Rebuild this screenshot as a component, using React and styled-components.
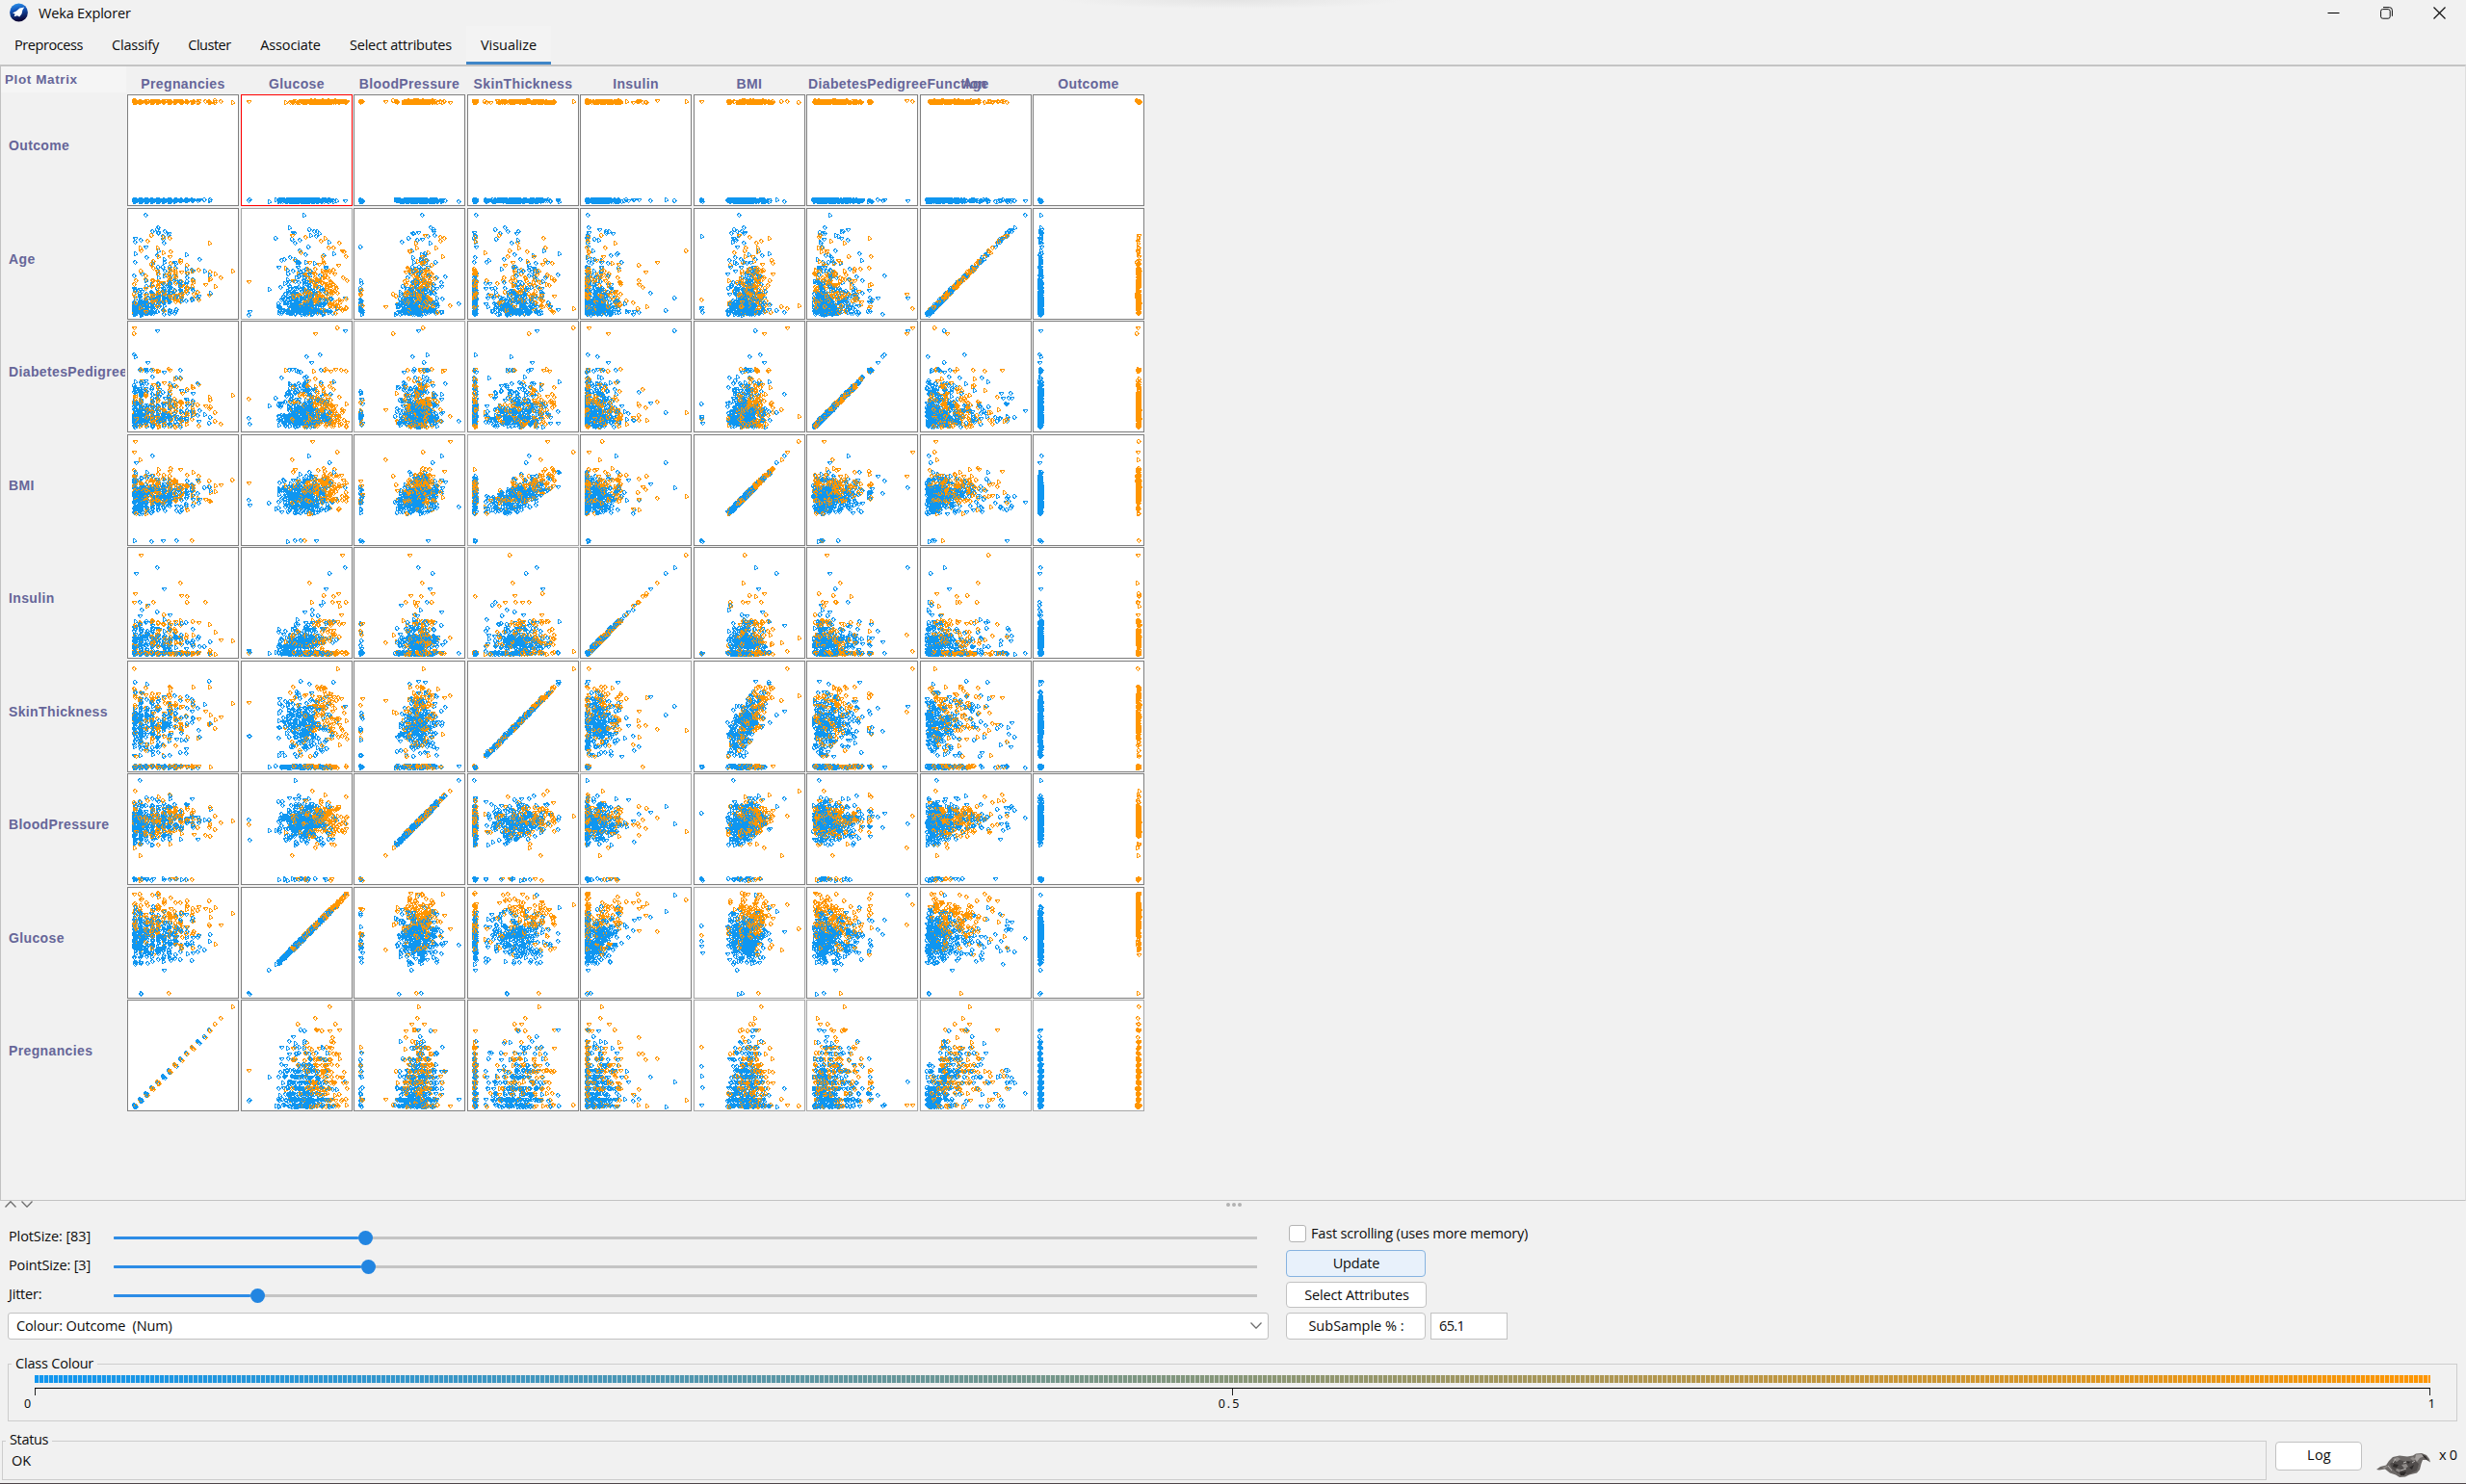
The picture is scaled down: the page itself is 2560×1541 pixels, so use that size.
import React from "react";
import styled, { createGlobalStyle } from "styled-components";

/* ---------- data ---------- */

function makeRandom(seed) {
  let s = seed;
  return () => {
    s = (s + 0x6d2b79f5) | 0;
    let t = Math.imul(s ^ (s >>> 15), 1 | s);
    t = (t + Math.imul(t ^ (t >>> 7), 61 | t)) ^ t;
    return ((t ^ (t >>> 14)) >>> 0) / 4294967296;
  };
}

// Columns: pregnancies, glucose, pressure, skin, insulin, bmi, pedigree, age, outcome
const NOTABLE = [
  [0, 129, 110, 46, 130, 67.1, 0.319, 26, 1],
  [13, 152, 90, 33, 29, 26.8, 0.731, 43, 1],
  [0, 180, 78, 63, 14, 59.4, 2.42, 25, 1],
  [4, 197, 70, 39, 744, 36.7, 2.329, 31, 0],
  [17, 163, 72, 41, 114, 40.9, 0.817, 47, 1],
  [2, 112, 76, 0, 0, 25.9, 0.46, 81, 0],
  [1, 189, 60, 23, 846, 30.1, 0.398, 59, 1],
  [0, 137, 40, 35, 168, 43.1, 2.288, 33, 1],
  [3, 123, 100, 35, 240, 57.3, 0.88, 22, 0],
  [1, 88, 30, 42, 99, 55, 0.496, 26, 1],
  [0, 173, 78, 54, 265, 46.5, 1.159, 58, 0],
  [5, 44, 62, 0, 0, 25, 0.587, 36, 0],
  [1, 96, 122, 0, 0, 22.4, 0.207, 27, 0],
  [1, 0, 48, 20, 0, 24.7, 0.14, 22, 0],
  [1, 0, 74, 20, 23, 27.7, 0.299, 21, 0],
  [6, 0, 68, 41, 0, 39, 0.727, 41, 1],
  [0, 165, 90, 33, 680, 52.3, 0.427, 23, 0],
  [8, 124, 76, 24, 600, 28.7, 0.687, 52, 1],
  [5, 155, 84, 44, 545, 38.7, 0.619, 34, 0],
  [0, 181, 88, 44, 510, 43.3, 0.222, 26, 1],
  [9, 173, 74, 0, 480, 36.8, 0.97, 38, 1],
  [8, 155, 62, 26, 495, 34, 0.543, 46, 1],
  [14, 100, 78, 25, 184, 36.6, 0.412, 46, 1],
  [14, 175, 62, 30, 0, 33.6, 0.212, 38, 1],
  [15, 136, 70, 32, 110, 37.1, 0.153, 43, 1],
  [13, 106, 72, 54, 0, 36.6, 0.178, 45, 0],
  [12, 88, 74, 40, 54, 35.3, 0.378, 48, 0],
  [0, 118, 64, 23, 89, 32.5, 1.731, 21, 0],
  [0, 146, 82, 0, 0, 40.5, 1.781, 44, 0],
  [2, 128, 78, 37, 182, 43.3, 1.6, 31, 0],
  [4, 83, 86, 19, 0, 29.3, 0.317, 74, 0],
  [0, 57, 60, 0, 0, 21.7, 0.735, 67, 0],
  [5, 115, 98, 0, 0, 32.9, 0.209, 68, 1],
  [0, 161, 50, 0, 0, 21.9, 0.254, 65, 0],
  [5, 136, 82, 0, 0, 0, 0.64, 69, 0],
  [3, 80, 0, 0, 0, 0, 0.174, 22, 0],
  [10, 115, 0, 0, 0, 0, 0.261, 30, 1],
  [0, 94, 0, 0, 0, 0, 0.256, 25, 0],
  [7, 105, 0, 0, 0, 0, 0.305, 24, 0],
];

function buildRecords(count) {
  const rnd = makeRandom(20240);
  const gauss = () => Math.sqrt(-2 * Math.log(rnd() + 1e-9)) * Math.cos(6.2831853 * rnd());
  const clamp = (v, a, b) => Math.max(a, Math.min(b, v));
  const rows = [];
  while (rows.length < count - NOTABLE.length) {
    const out = rnd() < 0.345 ? 1 : 0;
    const expo = -Math.log(rnd() + 1e-4);
    const age = Math.round(
      clamp(out ? 21 + (expo - Math.log(rnd() + 1e-3)) * 7.8 : 21 + expo * 10.6, 21, 70 + gauss() * 2)
    );
    const preg = Math.round(
      age < 29 ? clamp(-Math.log(rnd() + 1e-3) * 2.1 - 0.2, 0, 7) : clamp(5.4 + gauss() * 3.2, 0, 13)
    );
    const glucose = Math.round(clamp((out ? 142 : 110) + gauss() * (out ? 30 : 24), 62, 199));
    const bmi = clamp((out ? 35 : 30.8) + gauss() * 6.4, 18.6, 50 + gauss());
    const pressure =
      rnd() < 0.045 ? 0 : Math.round(clamp(71 + (age - 33) * 0.22 + (bmi - 32) * 0.35 + gauss() * 11.5, 44, 110));
    const noSkin = rnd() < 0.29;
    const skin = noSkin ? 0 : Math.round(clamp(29 + (bmi - 32) * 0.95 + gauss() * 7.6, 7, 52 + gauss() * 2));
    const noInsulin = noSkin || rnd() < 0.28;
    const insulin = noInsulin
      ? 0
      : Math.round(clamp(Math.exp(4.78 + (glucose - 120) * 0.0115 + gauss() * 0.5), 16, 440));
    const pedigree = clamp(Math.exp(-0.95 + gauss() * 0.65 + out * 0.15), 0.085, 1.39 + rnd() * 0.06);
    rows.push([preg, glucose, pressure, skin, insulin, bmi, pedigree, age, out]);
  }
  NOTABLE.forEach((r) => rows.splice(Math.floor(rnd() * rows.length), 0, r));
  return rows.map((values) => ({ values, jitter: values.map(() => (rnd() - 0.5) * 2) }));
}

const ATTRIBUTES = [
  { name: "Pregnancies", min: 0, max: 17 },
  { name: "Glucose", min: 0, max: 199 },
  { name: "BloodPressure", min: 0, max: 122 },
  { name: "SkinThickness", min: 0, max: 63 },
  { name: "Insulin", min: 0, max: 846 },
  { name: "BMI", min: 0, max: 67.1 },
  { name: "DiabetesPedigreeFunction", min: 0.078, max: 2.42 },
  { name: "Age", min: 21, max: 81 },
  { name: "Outcome", min: 0, max: 1 },
];
const ROWS = [8, 7, 6, 5, 4, 3, 2, 1, 0];
const RECORDS = buildRecords(500);

/* ---------- plot rasterising ---------- */

const INNER = 114;
const GLYPHS = [
  [".XX..", "XX.X.", "X..XX", ".X.X.", "..X.."],
  [".XX..", ".X.X.", ".X..X", ".X.XX", ".XX.."],
  [".....", "XXXXX", "XX..X", ".X.X.", "..X.."],
  [".XX..", "X..X.", "X..XX", "XX.X.", ".XX.."],
];

function plotPaths(ax, ay) {
  const grid = new Uint8Array(INNER * INNER);
  const frac = (a, r) =>
    (r.values[a] - ATTRIBUTES[a].min) / (ATTRIBUTES[a].max - ATTRIBUTES[a].min);
  for (const r of RECORDS) {
    const x = 7.3 + 101.7 * frac(ax, r) + r.jitter[ax] * 1.05;
    const y = 109.4 - 102.5 * frac(ay, r) + r.jitter[ay] * 1.05;
    const ix = Math.floor(x);
    const iy = Math.floor(y);
    const glyph = GLYPHS[(x - ix > 0.6 ? 1 : 0) + (y - iy > 0.6 ? 2 : 0)];
    const ink = r.values[8] ? 2 : 1;
    glyph.forEach((line, gy) => {
      for (let gx = 0; gx < 5; gx++) {
        const px = ix + gx - 2;
        const py = iy + gy - 2;
        if (line[gx] === "X" && px >= 0 && py >= 0 && px < INNER && py < INNER) {
          grid[py * INNER + px] = ink;
        }
      }
    });
  }
  const paths = ["", "", ""];
  for (let y = 0; y < INNER; y++) {
    let x = 0;
    while (x < INNER) {
      const ink = grid[y * INNER + x];
      let end = x + 1;
      while (end < INNER && grid[y * INNER + end] === ink) end++;
      if (ink) paths[ink] += `M${x} ${y}h${end - x}v1h${x - end}z`;
      x = end;
    }
  }
  return paths;
}

const FAINT = new Set(["1-1", "2-2", "3-3", "4-3", "5-4", "6-4", "7-5", "8-5", "8-6", "8-7", "8-8"]);

/* ---------- styles ---------- */

const Global = createGlobalStyle`
  * { box-sizing: border-box; }
  body { margin: 0; background: #f1f1f1; }
`;

const Window = styled.div`
  width: 2560px;
  height: 1541px;
  display: flex;
  flex-direction: column;
  overflow: hidden;
  background: #f1f1f1;
  border-bottom: 1px solid #4d4549;
  color: #0c0c0c;
  font: 14.5px/20px "Open Sans", "Noto Sans", sans-serif;
`;

const Text = styled.span`
  white-space: pre;
  letter-spacing: ${(p) => p.$ls || 0}px;
`;

const TitleBar = styled.header`
  height: 27px;
  display: flex;
  align-items: center;
  padding: 0 21px 1px 10px;
  background: radial-gradient(ellipse 178px 9px at 1280px 0, #e4e4e4, #f1f1f1);
`;
const TitleText = styled(Text)`
  margin-left: 11px;
  padding-top: 1px;
  flex: 1;
`;
const WindowButtons = styled.div`
  display: flex;
  gap: 42px;
`;

const Tabs = styled.nav`
  height: 40px;
  display: flex;
`;
const Tab = styled.div`
  width: ${(p) => p.$w}px;
  display: flex;
  align-items: center;
  justify-content: center;
  padding-top: ${(p) => (p.$active ? 2 : 0)}px;
  border-bottom: ${(p) => (p.$active ? "3px solid #3f86c8" : "0")};
  background: ${(p) => (p.$active ? "#f3f3f3" : "none")};
`;

const MatrixPanel = styled.main`
  height: 1180px;
  flex: none;
  border: 1px solid #c2c2c2;
  border-top: 2px solid #c4c4c4;
  border-right-color: #dedede;
`;
const Matrix = styled.div`
  display: grid;
  grid-template-columns: 131px 118px 117px 118px 117px 118px 117px 118px 117px 116px;
  grid-template-rows: 29px 118px 117px 118px 117px 118px 117px 118px 117px 116px;
  justify-content: start;
  color: #666699;
  font: bold 14px/16px "Liberation Sans", Arial, sans-serif;
  letter-spacing: 0.37px;
`;
const MatrixTitle = styled.div`
  width: 130px;
  height: 27px;
  padding: 6px 0 0 4px;
  background: #f5f5f5;
  font-size: 13.5px;
  letter-spacing: 0.6px;
`;
const ColumnName = styled.div`
  width: 116px;
  padding: 10px 2px 0;
  display: flex;
  justify-content: ${(p) => (p.$long ? "flex-start" : "center")};
  white-space: nowrap;
`;
const RowName = styled.div`
  width: 129px;
  height: 106px;
  padding-left: 8px;
  display: flex;
  align-items: center;
  overflow: hidden;
`;
const Cell = styled.div`
  width: 116px;
  height: 116px;
  background: #fff;
  border: 1px solid ${(p) => (p.$selected ? "#ff0000" : p.$faint ? "#a6a6a6" : "#7f7f7f")};
`;
const Plot = styled.svg`
  display: block;
`;

const SplitBar = styled.div`
  height: 22px;
  flex: none;
  display: grid;
  grid-template-columns: 1fr auto 1fr;
  align-items: start;
  padding-left: 5px;
`;
const Arrows = styled.div`
  display: flex;
  gap: 5px;
`;
const Grip = styled.div`
  display: flex;
  gap: 2px;
  padding: 2px 4px 0 0;
`;
const GripDot = styled.i`
  width: 4px;
  height: 4px;
  border-radius: 50%;
  background: #b2b2b2;
`;

const Controls = styled.section`
  display: grid;
  grid-template-columns: 1309px 1fr;
  column-gap: 18px;
  padding-left: 8px;
  height: 122px;
`;
const SliderRow = styled.div`
  height: 30px;
  display: grid;
  grid-template-columns: 109px 1187px;
  align-items: center;
  padding-left: 1px;
`;
const Track = styled.div`
  height: 15px;
  margin-top: 3px;
  display: flex;
  align-items: center;
  background: linear-gradient(#c4c4c4, #c4c4c4) 0 50% / 100% 3px no-repeat;
`;
const Filled = styled.div`
  width: ${(p) => p.$w}px;
  height: 3px;
  border-radius: 1px;
  background: #2d8ce6;
`;
const Thumb = styled.div`
  width: 15px;
  height: 15px;
  border-radius: 50%;
  background: #2285e1;
`;
const Combo = styled.div`
  height: 28px;
  margin-top: 4px;
  display: flex;
  align-items: center;
  justify-content: space-between;
  padding: 0 6px 1px 8px;
  background: #fff;
  border: 1px solid #c2c2c2;
  border-radius: 3px;
`;
const Actions = styled.div`
  display: flex;
  flex-direction: column;
  align-items: flex-start;
  padding-top: 3px;
`;
const CheckRow = styled.label`
  display: flex;
  height: 18px;
  gap: 5px;
  padding-left: 3px;
  margin-bottom: 8px;
  line-height: 17px;
`;
const CheckBox = styled.span`
  width: 18px;
  height: 18px;
  background: #fff;
  border: 1px solid #b4b4b4;
  border-radius: 3px;
`;
const Button = styled.button`
  width: ${(p) => p.$w || 145}px;
  height: ${(p) => p.$h || 28}px;
  padding: 0 0 1px 1px;
  margin: 0;
  color: inherit;
  font: inherit;
  background: ${(p) => (p.$focus ? "#e8f1fb" : "#fff")};
  border: 1px solid ${(p) => (p.$focus ? "#86b3e0" : "#c2c2c2")};
  border-radius: 4px;
`;
const SubSampleRow = styled.div`
  display: flex;
  gap: 5px;
  margin-top: 5px;
`;
const Field = styled.div`
  width: 80px;
  height: 28px;
  padding: 3px 8px;
  background: #fff;
  border: 1px solid #c2c2c2;
`;
const SelectButton = styled(Button)`
  margin-top: 5px;
  padding-bottom: 0;
`;
const LogButton = styled(Button)`
  padding-bottom: 2px;
`;

const Group = styled.fieldset`
  min-width: 0;
  margin: 0;
  padding: 0;
  border: 1px solid #cdcdcd;
`;
const Legend = styled.legend`
  height: 20px;
  line-height: ${(p) => p.$line || 18}px;
  margin-left: 3px;
  padding: 0 4px;
`;
const ClassGroup = styled(Group)`
  width: 2543px;
  height: 70px;
  margin: 15px 0 0 8px;
`;
const Scale = styled.div`
  margin: 2px 27px 0;
`;
const Gradient = styled.div`
  height: 8px;
  background:
    repeating-linear-gradient(90deg, transparent 0 4px, rgba(241, 241, 241, 0.72) 4px 5px),
    linear-gradient(90deg, rgb(15, 150, 240), rgb(255, 150, 0));
`;
const Axis = styled.div`
  height: 8px;
  margin-top: 5px;
  border-top: 1px solid #000;
  display: flex;
  justify-content: space-between;
`;
const Tick = styled.i`
  width: 1px;
  height: 7px;
  background: #222;
`;
const AxisNumbers = styled.div`
  display: flex;
  justify-content: space-between;
  margin: 0 -5px 0 -11px;
  font: 12.5px/18px "Noto Sans", sans-serif;
`;

const Footer = styled.footer`
  display: flex;
  align-items: flex-start;
  margin-top: 10px;
  padding-left: 2px;
`;
const StatusGroup = styled(Group)`
  width: 2351px;
  height: 51px;
`;
const StatusText = styled.div`
  padding: 1px 0 0 9px;
`;
const LogBox = styled.div`
  display: flex;
  align-items: flex-start;
  margin: 11px 0 0 9px;
`;
const Bird = styled.svg`
  margin: 12px 9px 0 15px;
`;
const TaskCount = styled(Text)`
  padding-top: 4px;
`;

/* ---------- drawings ---------- */

function WekaIcon() {
  return (
    <svg width="19" height="20" viewBox="0 0 19 20">
      <defs>
        <linearGradient id="weka" x1="0" y1="0" x2="0.2" y2="1">
          <stop offset="0" stopColor="#2f9af0" />
          <stop offset="0.4" stopColor="#1358bd" />
          <stop offset="1" stopColor="#0d0838" />
        </linearGradient>
      </defs>
      <circle cx="9.5" cy="10" r="9.4" fill="url(#weka)" />
      <path d="M15.3 4.4L10.4 5.6L7 8.4L3 10.6L5.6 11.6L4.6 14.2L8 13.2L10.2 14.6L12.6 11.2L13.4 7.4Z" fill="#fff" />
    </svg>
  );
}

function Chevron({ up, w = 12, h = 7 }) {
  return (
    <svg width={w} height={h} viewBox="0 0 12 7" fill="none" stroke="#6e6e6e" strokeWidth="1.3">
      <path d={up ? "M0.5 6.5L6 0.7L11.5 6.5" : "M0.5 0.5L6 6.2L11.5 0.5"} />
    </svg>
  );
}

function WindowIcons() {
  return (
    <WindowButtons>
      <svg width="13" height="13" stroke="#000" fill="none">
        <path d="M0.5 6.5h12" />
      </svg>
      <svg width="13" height="13" stroke="#111" fill="none">
        <rect x="0.6" y="2.6" width="9.6" height="9.6" rx="2" />
        <path d="M3 0.6h6.4a3 3 0 0 1 3 3v6.2" />
      </svg>
      <svg width="13" height="13" stroke="#111" strokeWidth="1.2" fill="none">
        <path d="M0.5 0.5l12 12M12.5 0.5l-12 12" />
      </svg>
    </WindowButtons>
  );
}

function WekaBird() {
  return (
    <Bird width="56" height="26" viewBox="0 0 56 26">
      <path
        d="M0 17L4 14L10 12.500L13 8L17 4L24 2.500L32 3.500L38 2.500L41 0.500L47 0L52 2L55 6L56 9.500L52 7L48 7L46.500 11L45 17L42 20.500L34 22.500L30 24.500L24 25L20 22.500L14 20.500L9 16.500L3 17.500Z"
        fill="#6d6967"
      />
      <path d="M14 11l7-5 10 3 8-2 5 4-2 7-9 4-11-1-6-5z" fill="#514d4c" />
      <path d="M17 6l5-2 3 2-4 3zM26 12l5-1 2 3-4 2zM35 5l3-1 3 2-3 2zM21 16l4 1-1 3-4-2zM6 15l5-2 1 1-4 2z" fill="#8f8b89" />
      <path d="M41 1.500l6-.5 3 2-5 2-3 4-2-3z" fill="#a5a19f" />
      <path d="M18 11l5 1-2 3-4-1zM31 8l4 1-2 2zM34 15l5-3-2 5zM24 20l7-1-2 4h-4zM47 1l4 2 3 5-4-3z" fill="#2e2b2a" />
      <path d="M28 10l3-1M20 6l-3 4M37 10l3-2M12 13l4 5M25 18l6-2" stroke="#b9b6b4" fill="none" />
    </Bird>
  );
}

/* ---------- page ---------- */

const TABS = [
  ["Preprocess", 101, -0.44],
  ["Classify", 79, -0.19],
  ["Cluster", 75, -0.5],
  ["Associate", 93, -0.13],
  ["Select attributes", 136, -0.22],
  ["Visualize", 88, -0.04],
];

const SLIDERS = [
  ["PlotSize: [83]", -0.1, 254],
  ["PointSize: [3]", -0.14, 257],
  ["Jitter:", -0.2, 142],
];

function PlotCell({ row, col }) {
  const [, blue, orange] = plotPaths(col, ROWS[row]);
  return (
    <Cell $selected={row === 0 && col === 1} $faint={FAINT.has(`${row}-${col}`)}>
      <Plot width={INNER} height={INNER} shapeRendering="crispEdges">
        <path d={blue} fill="#0f96f0" />
        <path d={orange} fill="#ff9600" />
      </Plot>
    </Cell>
  );
}

export default function App() {
  return (
    <Window>
      <Global />
      <TitleBar>
        <WekaIcon />
        <TitleText $ls={-0.17}>Weka Explorer</TitleText>
        <WindowIcons />
      </TitleBar>
      <Tabs>
        {TABS.map(([name, w, ls]) => (
          <Tab key={name} $w={w} $active={name === "Visualize"}>
            <Text $ls={ls}>{name}</Text>
          </Tab>
        ))}
      </Tabs>

      <MatrixPanel>
        <Matrix>
          <MatrixTitle>Plot Matrix</MatrixTitle>
          {ATTRIBUTES.map((a) => (
            <ColumnName key={a.name} $long={a.name.length > 20}>
              {a.name}
            </ColumnName>
          ))}
          {ROWS.map((attr, row) => (
            <React.Fragment key={attr}>
              <RowName>{ATTRIBUTES[attr].name}</RowName>
              {ATTRIBUTES.map((a, col) => (
                <PlotCell key={a.name} row={row} col={col} />
              ))}
            </React.Fragment>
          ))}
        </Matrix>
      </MatrixPanel>

      <SplitBar>
        <Arrows>
          <Chevron up />
          <Chevron />
        </Arrows>
        <Grip>
          <GripDot />
          <GripDot />
          <GripDot />
        </Grip>
      </SplitBar>

      <Controls>
        <div>
          {SLIDERS.map(([name, ls, w]) => (
            <SliderRow key={name}>
              <Text $ls={ls}>{name}</Text>
              <Track>
                <Filled $w={w} />
                <Thumb />
              </Track>
            </SliderRow>
          ))}
          <Combo>
            <Text $ls={-0.13}>{"Colour: Outcome  (Num)"}</Text>
            <Chevron />
          </Combo>
        </div>
        <Actions>
          <CheckRow>
            <CheckBox />
            <Text $ls={-0.19}>Fast scrolling (uses more memory)</Text>
          </CheckRow>
          <Button $focus>
            <Text $ls={-0.2}>Update</Text>
          </Button>
          <SelectButton $w={146} $h={27}>
            <Text $ls={-0.13}>Select Attributes</Text>
          </SelectButton>
          <SubSampleRow>
            <Button>
              <Text>SubSample % :</Text>
            </Button>
            <Field>
              <Text $ls={-0.65}>65.1</Text>
            </Field>
          </SubSampleRow>
        </Actions>
      </Controls>

      <ClassGroup>
        <Legend $line={19}>
          <Text $ls={-0.2}>Class Colour</Text>
        </Legend>
        <Scale>
          <Gradient />
          <Axis>
            <Tick />
            <Tick />
            <Tick />
          </Axis>
          <AxisNumbers>
            <Text>0</Text>
            <Text $ls={2}>0.5</Text>
            <Text>1</Text>
          </AxisNumbers>
        </Scale>
      </ClassGroup>

      <Footer>
        <StatusGroup>
          <Legend>
            <Text $ls={-0.35}>Status</Text>
          </Legend>
          <StatusText>OK</StatusText>
        </StatusGroup>
        <LogBox>
          <LogButton $w={90} $h={30}>
            <Text $ls={0.2}>Log</Text>
          </LogButton>
          <WekaBird />
          <TaskCount $ls={-0.3}>x 0</TaskCount>
        </LogBox>
      </Footer>
    </Window>
  );
}
